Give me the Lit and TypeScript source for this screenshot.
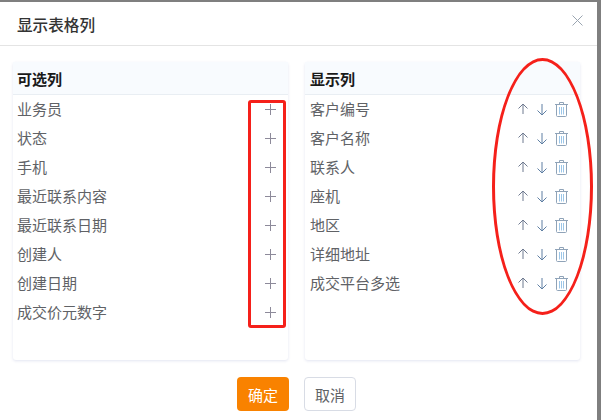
import { LitElement, html, css, svg } from "lit"
import { customElement } from "lit/decorators.js"

const available = ["业务员", "状态", "手机", "最近联系内容", "最近联系日期", "创建人", "创建日期", "成交价元数字"]
const shown = ["客户编号", "客户名称", "联系人", "座机", "地区", "详细地址", "成交平台多选"]

const plusIcon = svg`<svg class="icon plus" width="11" height="11" viewBox="0 0 11 11"><path d="M5.500 0v11M0 5.500h11" stroke="#8d8a9a" fill="none"/></svg>`
const upIcon = svg`<svg class="icon" width="10" height="11" viewBox="0 0 10 11"><path d="M5 11V1M.5 5.500 5 1l4.500 4.500" stroke="#6f7a90" fill="none"/></svg>`
const downIcon = svg`<svg class="icon down" width="10" height="12" viewBox="0 0 10 12"><path d="M5 0v11M.5 6.500 5 11l4.500-4.500" stroke="#5f7fa3" fill="none"/></svg>`
const trashIcon = svg`<svg class="icon trash" width="13" height="15" viewBox="0 0 13 15"><g fill="none" stroke="#8fa3b8"><path d="M0 2.500h13M4.500 2.500V.5h4v2"/><path d="M1.500 2.500v11c0 .6.4 1 1 1h8c.6 0 1-.4 1-1v-11"/><path d="M4.500 5v7.500M6.500 5v7.500M8.500 5v7.500" stroke="#9cc6e8"/></g></svg>`

@customElement("app-root")
export class AppRoot extends LitElement {
  static styles = css`
    :host {
      display: block;
      position: relative;
      width: 601px;
      height: 420px;
      overflow: hidden;
      box-sizing: border-box;
      padding: 2px 4px 0 0;
      background: #7f7f7f;
      font-family: "Noto Sans CJK SC", "Liberation Sans", sans-serif;
      color: #606266;
    }
    .modal {
      height: 418px;
      background: #fff;
      display: flex;
      flex-direction: column;
    }
    .head {
      height: 44px;
      flex: none;
      box-sizing: border-box;
      border-bottom: 1px solid #e4e4e4;
      display: flex;
      align-items: center;
      justify-content: space-between;
      padding: 0 14px 0 17px;
    }
    .head svg {
      margin-top: -6px;
    }
    .title {
      font-size: 15.600px;
      font-weight: 500;
      color: #333;
    }
    .body {
      display: flex;
      gap: 17px;
      padding: 16px 16px 0 13px;
    }
    .panel {
      width: 275px;
      height: 298px;
      box-sizing: border-box;
      border-radius: 3px;
      background: #fff;
      box-shadow: 0 1px 3px rgba(190, 195, 225, 0.45);
    }
    .panel-head {
      height: 33px;
      box-sizing: border-box;
      background: #f8fbfe;
      border-bottom: 1px solid #e9eef3;
      padding-left: 4px;
      line-height: 33px;
      font-size: 15px;
      font-weight: 700;
      color: #1a1a1a;
    }
    .rows {
      margin-top: -1px;
    }
    .row {
      height: 29px;
      display: flex;
      align-items: center;
      justify-content: space-between;
      padding: 0 12px 0 4px;
      font-size: 15px;
    }
    .shown .panel-head,
    .shown .row {
      padding-left: 5px;
    }
    .icon {
      display: block;
    }
    .plus {
      margin-top: 2px;
    }
    .ops {
      display: flex;
      align-items: center;
      gap: 9px;
    }
    .down {
      margin-top: 3px;
    }
    .trash {
      margin: 2px 0 0 -1px;
    }
    .foot {
      display: flex;
      justify-content: center;
      gap: 15px;
      padding: 17px 4px 0 0;
    }
    button {
      width: 52px;
      height: 34px;
      box-sizing: border-box;
      border-radius: 4px;
      font: inherit;
      font-size: 15px;
      padding: 0;
    }
    .ok {
      border: none;
      background: #f98200;
      color: #fff;
    }
    .cancel {
      border: 1px solid #d8dce5;
      background: #fff;
      color: #606266;
    }
    .mark-rect {
      position: absolute;
      left: 248px;
      top: 100px;
      width: 38px;
      height: 228px;
      box-sizing: border-box;
      border: 3px solid #f5201a;
      border-radius: 3px;
    }
    .mark-oval {
      position: absolute;
      left: 492px;
      top: 58px;
      width: 101px;
      height: 257px;
      box-sizing: border-box;
      border: 3px solid #f5201a;
      border-radius: 50%;
    }
  `

  render() {
    return html`
      <div class="modal">
        <div class="head">
          <span class="title">显示表格列</span>
          <svg width="11" height="11" viewBox="0 0 11 11"><path d="M.5.5l10 10M10.500.5l-10 10" stroke="#9aa5b1" fill="none"/></svg>
        </div>
        <div class="body">
          <div class="panel">
            <div class="panel-head">可选列</div>
            <div class="rows">
              ${available.map(name => html`<div class="row"><span>${name}</span>${plusIcon}</div>`)}
            </div>
          </div>
          <div class="panel shown">
            <div class="panel-head">显示列</div>
            <div class="rows">
              ${shown.map(name => html`<div class="row"><span>${name}</span><span class="ops">${upIcon}${downIcon}${trashIcon}</span></div>`)}
            </div>
          </div>
        </div>
        <div class="foot">
          <button class="ok">确定</button>
          <button class="cancel">取消</button>
        </div>
      </div>
      <div class="mark-rect"></div>
      <div class="mark-oval"></div>
    `
  }
}
